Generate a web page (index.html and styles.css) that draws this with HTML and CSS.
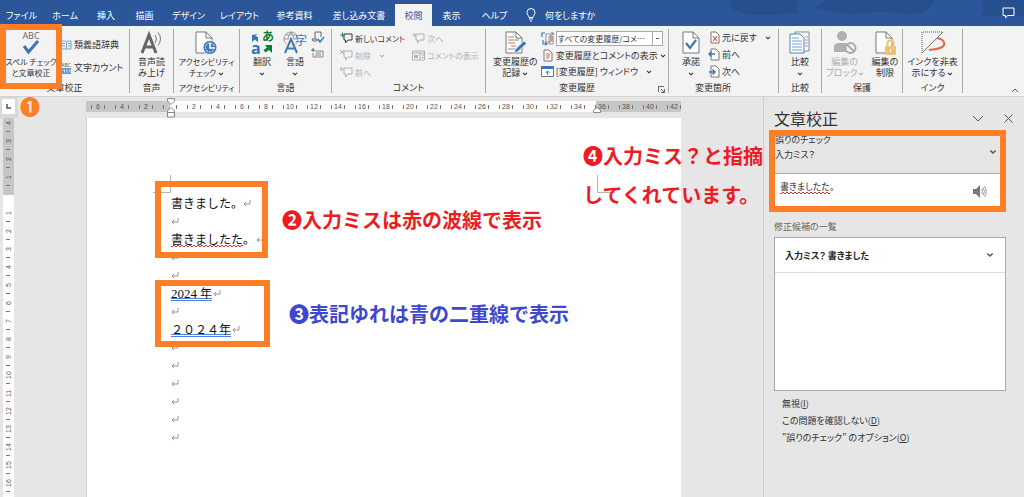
FILE: index.html
```html
<!DOCTYPE html>
<html lang="ja">
<head>
<meta charset="utf-8">
<title>文章校正</title>
<link rel="stylesheet" href="styles.css">
</head>
<body>
<svg class="defs" aria-hidden="true">
  <symbol id="ret" viewBox="0 0 8 8"><path d="M7 1v4H1M3.2 2.8 1 5l2.2 2.2" fill="none" stroke="#8a8a8a" stroke-width=".9"/></symbol>
  <symbol id="chev" viewBox="0 0 6 4"><path d="M1 .8 3 2.8 5 .8" fill="none" stroke="currentColor" stroke-width="1.1"/></symbol>
  <symbol id="bubble" viewBox="0 0 13 13"><path d="M4 2h8v6H8l-2.500 3V8H4z" fill="none" stroke="currentColor" stroke-width="1"/></symbol>
  <symbol id="page" viewBox="0 0 18 23"><path d="M1 1h10l6 6v15H1z" fill="#fff" stroke="#777"/><path d="M11 1v6h6" fill="none" stroke="#777"/></symbol>
</svg>

<header class="titlebar">
  <svg class="waves" viewBox="0 0 300 26" aria-hidden="true"><path d="M6 0h68c-3 3-2 8 2 13-12-2-20 2-32 2C28 15 14 14 8 8zM88 8c8-3 10-8 18-8h104c0 4-4 12-20 14-14 2-22-3-36-2-18 1-24 4-40 1-10-1-16-5-26-5zM260 0h40v17c-12-4-24 0-44-1 8-4 0-10 4-16z" fill="#264f8e"/></svg>
  <nav class="tabs">
    <button>ファイル</button><button>ホーム</button><button>挿入</button><button>描画</button><button>デザイン</button><button>レイアウト</button><button>参考資料</button><button>差し込み文書</button><button class="active">校閲</button><button>表示</button><button>ヘルプ</button>
    <button class="tell"><svg width="10" height="14" viewBox="0 0 10 14"><path d="M3 9.500C3 7.500 1 7 1 4.500a4 4 0 0 1 8 0C9 7 7 7.500 7 9.500zM3 11h4M4 13h2" fill="none" stroke="#fff"/></svg>何をしますか</button>
  </nav>
  <button class="comment-btn" aria-label="コメント"><svg width="13" height="12" viewBox="0 0 13 12"><path d="M1 1h11v7.500H5.500L3.500 11V8.500H1z" fill="none" stroke="#fff"/></svg></button>
</header>

<div class="ribbon">
  <section class="group">
    <div class="body">
      <button class="big spell compact"><svg width="24" height="24" viewBox="0 0 24 24"><text x="12" y="8" text-anchor="middle" class="abc">ABC</text><path d="m5 15 4.500 6L19 10" fill="none" stroke="#3e76b5" stroke-width="3"/></svg><span>スペル チェック<br>と文章校正</span></button>
      <div class="rows two">
        <button><svg width="11" height="12" viewBox="0 0 11 12"><path d="M0 2h4.500l1 1 1-1H10v8H0zM5.500 3v7M0 4.500h4M0 7h4M7 4.500h3M7 7h3" fill="none" stroke="#7ba3cf"/></svg>類義語辞典</button>
        <button><svg width="11" height="12" viewBox="0 0 11 12"><text x="5" y="5" text-anchor="middle" class="tiny">ABC</text><path d="M0 6h10v6H0z" fill="#6898cb"/><path d="M2 8h1.500v2.500M5 8h1v2.500M8 8h1v2.500" stroke="#fff" fill="none" stroke-width=".7"/></svg>文字カウント</button>
      </div>
    </div>
    <h2>文章校正</h2>
  </section>
  <section class="group">
    <div class="body"><button class="big"><svg width="24" height="24" viewBox="0 0 24 24"><path d="M3 22 10 4l7 18M5.500 16h9" fill="none" stroke="#666" stroke-width="3"/><path d="M16 4q3 4 0 8M19 1.500q5 6 0 13" fill="none" stroke="#777"/></svg><span>音声読<br>み上げ</span></button></div>
    <h2>音声</h2>
  </section>
  <section class="group compact">
    <div class="body"><button class="big"><svg width="24" height="24" viewBox="0 0 24 24"><use href="#page" x="1" y="0" width="18" height="23"/><circle cx="16" cy="16.500" r="7" fill="#3e78b8" stroke="#f3f3f3"/><circle cx="16" cy="16.500" r="4.500" fill="none" stroke="#fff" stroke-dasharray="2 1"/><path d="M16 12v5h4" fill="none" stroke="#fff" stroke-width="1.500"/></svg><span>アクセシビリティ<br>チェック <svg class="c"><use href="#chev"/></svg></span></button></div>
    <h2>アクセシビリティ</h2>
  </section>
  <section class="group">
    <div class="body lang">
      <button class="big"><svg width="24" height="24" viewBox="0 0 24 24"><text x="1" y="23" class="ta">a</text><text x="12" y="10" class="tj">あ</text><path d="M2 4v7l2.500-2.500L8 11V6L5 5l3-2z" fill="#2b76bd"/><path d="M22 22v-8h-7l2 2.500-3.500 2.500 2 2.500 3.500-2.500z" fill="#11783c"/></svg><span>翻訳<br><svg class="c"><use href="#chev"/></svg></span></button>
      <button class="big"><svg width="26" height="24" viewBox="0 0 26 24"><circle cx="9" cy="8" r="7" fill="none" stroke="#888" stroke-width=".8"/><path d="M2 8h14M9 1v8M4 4h10M6 8q0-4 3-7 3 3 3 7" fill="none" stroke="#888" stroke-width=".8"/><path d="M3 22 9 8l6 14M5 17.500h8" stroke="#f3f3f3" stroke-width="4" fill="none"/><path d="M3 22 9 8l6 14M5 17.500h8" stroke="#3e78b8" stroke-width="2" fill="none"/><text x="13" y="14" class="tz">字</text></svg><span>言語<br><svg class="c"><use href="#chev"/></svg></span></button>
      <div class="icons">
        <button aria-label="表記ゆれチェック"><svg width="13" height="13" viewBox="0 0 13 13"><path d="M4 1h6v5M4 1v7M1 8h5v2H2z" fill="none" stroke="#666"/><path d="m7 8 2 3 4-5" fill="none" stroke="#3e78b8" stroke-width="1.500"/></svg></button>
        <button aria-label="日本語入力辞書への単語登録"><svg width="13" height="11" viewBox="0 0 13 11"><path d="M4 3h8v6H2V5M4 7h6M5 5h5" fill="none" stroke="#888"/><path d="M0 2h4M2 0v4" stroke="#2a8a57"/></svg></button>
      </div>
    </div>
    <h2>言語</h2>
  </section>
  <section class="group">
    <div class="body comments">
      <div class="rows compact">
        <button><svg width="13" height="13"><use href="#bubble"/><path d="M0 3h5M2.500.5v5" stroke="#2a8a57"/></svg>新しいコメント</button>
        <button class="off" disabled><svg width="13" height="13"><use href="#bubble"/><path d="m0 1 4 4m0-4L0 5" stroke="currentColor"/></svg>削除<svg class="c gap"><use href="#chev"/></svg></button>
        <button class="off" disabled><svg width="13" height="13"><use href="#bubble"/><path d="M0 3h4M2 1 0 3l2 2" fill="none" stroke="currentColor"/></svg>前へ</button>
      </div>
      <div class="rows compact">
        <button class="off" disabled><svg width="13" height="13"><use href="#bubble"/><path d="M0 3h4M2 1l2 2-2 2" fill="none" stroke="currentColor"/></svg>次へ</button>
        <button class="off" disabled><svg width="13" height="13" viewBox="0 0 13 13"><path d="M.5 2h12v9H.5zM.5 4h12M8 4v7M9.500 6H12M9.500 8.500H12" fill="none" stroke="currentColor"/><path d="M2 6h4v3H2z" fill="currentColor"/></svg>コメントの表示</button>
      </div>
    </div>
    <h2>コメント</h2>
  </section>
  <section class="group">
    <div class="body track">
      <button class="big"><svg width="24" height="24" viewBox="0 0 24 24"><use href="#page" x="2" y="0" width="18" height="23"/><path d="M5 6h6M5 12h7M8 15h5" stroke="#e2725b" fill="none"/><path d="M5 9h11M5 18h7" stroke="#888" fill="none"/><path d="m11 22 1.500-4L21 10l2.500 2.500L15 20.500z" fill="#3e78b8" stroke="#f3f3f3" stroke-width=".6"/></svg><span>変更履歴の<br>記録 <svg class="c"><use href="#chev"/></svg></span></button>
      <div class="rows">
        <label class="combo"><svg width="13" height="13" viewBox="0 0 13 13"><path d="M5 2h5v8H5zM8 4h4v8H8z" fill="#fff" stroke="#777" stroke-width=".8"/><path d="M9 6h3M9 8h3" stroke="#dc5a42"/><path d="M1 5V1h3M2 8v4h4M4 10l2 2-2 1M10 1h2v2" fill="none" stroke="#3e78b8" stroke-width="1.200"/></svg><select aria-label="変更内容の表示"><option>すべての変更履歴/コメ…</option></select></label>
        <button><svg width="13" height="13" viewBox="0 0 13 13"><path d="M3 1h5l3 3v8H3z" fill="#fff" stroke="#777"/><path d="M5 5h4M5 7h4M5 9h3" stroke="#dc5a42"/></svg>変更履歴とコメントの表示<svg class="c"><use href="#chev"/></svg></button>
        <button><svg width="13" height="13" viewBox="0 0 13 13"><path d="M.5 1.500h12v10H.5z" fill="#fff" stroke="#777"/><path d="M0 1h13v3H0z" fill="#3e78b8"/><path d="M6.500 10V6M4.500 8l2-2 2 2" fill="none" stroke="#3e78b8"/></svg>[変更履歴] ウィンドウ<svg class="c gap"><use href="#chev"/></svg></button>
      </div>
    </div>
    <h2>変更履歴</h2>
    <button class="launcher" aria-label="変更履歴オプション"><svg width="7" height="7" viewBox="0 0 7 7"><path d="M.5 6V.5H6M3 3l3 3M6.500 3v3.500H3" fill="none" stroke="#555" stroke-width=".9"/></svg></button>
  </section>
  <section class="group">
    <div class="body changes">
      <button class="big"><svg width="18" height="24" viewBox="0 0 18 24"><use href="#page" width="18" height="23"/><path d="m4 12 4 5 6-8" fill="none" stroke="#3e78b8" stroke-width="2.200"/></svg><span>承諾<br><svg class="c"><use href="#chev"/></svg></span></button>
      <div class="rows">
        <button><svg width="11" height="13" viewBox="0 0 11 13"><path d="M2 1h5l3 3v8H2z" fill="#fff" stroke="#777"/><path d="m4 5 4 5m0-5-4 5" stroke="#dc5a42" stroke-width="1.200"/></svg>元に戻す<svg class="c gap"><use href="#chev"/></svg></button>
        <button><svg width="11" height="13" viewBox="0 0 11 13"><path d="M2 1h5l3 3v8H2z" fill="#fff" stroke="#777"/><path d="M0 6h6M2.500 3.500 0 6l2.500 2.500" fill="none" stroke="#3e78b8" stroke-width="1.500"/></svg>前へ</button>
        <button><svg width="11" height="13" viewBox="0 0 11 13"><path d="M2 1h5l3 3v8H2z" fill="#fff" stroke="#777"/><path d="M0 7h6M3.500 4.500 6 7 3.500 9.500" fill="none" stroke="#3e78b8" stroke-width="1.500"/></svg>次へ</button>
      </div>
    </div>
    <h2 class="left">変更箇所</h2>
  </section>
  <section class="group">
    <div class="body"><button class="big"><svg width="22" height="24" viewBox="0 0 22 24"><path d="M6 1h14v19H6z" fill="#fff" stroke="#888"/><path d="M1 3h10l4 4v15H1z" fill="#fff" stroke="#4c83bf"/><path d="M3 7h7M3 10h10M3 13h10M3 16h10M3 19h10M16 6h3M16 9h3M16 12h3M16 15h3" stroke="#77a0cf"/></svg><span>比較<br><svg class="c"><use href="#chev"/></svg></span></button></div>
    <h2>比較</h2>
  </section>
  <section class="group">
    <div class="body protect">
      <button class="big off" disabled><svg width="24" height="24" viewBox="0 0 24 24"><circle cx="9" cy="5" r="5" fill="#b0b0b0"/><path d="M1 21v-5q0-4 5-4h6q4 0 4 4v5z" fill="#b0b0b0"/><circle cx="17.500" cy="17" r="5" fill="#f3f3f3" stroke="#aaa" stroke-width="2"/><path d="m14 13.500 7 7" stroke="#aaa" stroke-width="2"/></svg><span>編集の<br>ブロック<svg class="c"><use href="#chev"/></svg></span></button>
      <button class="big"><svg width="22" height="24" viewBox="0 0 22 24"><use href="#page" x="1" width="18" height="23"/><path d="M11 15h11v9H11z" fill="#eec474"/><path d="M13.500 15v-2.500a3 3 0 0 1 6 0V15" fill="none" stroke="#eec474" stroke-width="2"/><path d="M16.500 18v3" stroke="#fff"/></svg><span>編集の<br>制限</span></button>
    </div>
    <h2>保護</h2>
  </section>
  <section class="group">
    <div class="body"><button class="big"><svg width="24" height="24" viewBox="0 0 24 24"><path d="M1 22V1h21" fill="none" stroke="#555" stroke-dasharray="1 1"/><path d="M1 22 22 1" stroke="#777"/><path d="M16 7c5 1 8 3 7 7-1 3-6 4-15 5" fill="none" stroke="#e0654b" stroke-width="2"/></svg><span>インクを非表<br>示にする <svg class="c"><use href="#chev"/></svg></span></button></div>
    <h2>インク</h2>
  </section>
  <button class="collapse" aria-label="リボンを折りたたむ"><svg width="8" height="5" viewBox="0 0 8 5"><path d="m1 4 3-3 3 3" fill="none" stroke="#555"/></svg></button>
</div>

<main class="workspace">
  <div class="corner"><button aria-label="左揃えタブ"><svg width="5" height="5" viewBox="0 0 5 5"><path d="M1 0v4h4" fill="none" stroke="#555" stroke-width="1.500"/></svg></button></div>
  <div class="hruler">
    <span>6</span><span>4</span><span>2</span><span></span><span>2</span><span>4</span><span>6</span><span>8</span><span>10</span><span>12</span><span>14</span><span>16</span><span>18</span><span>20</span><span>22</span><span>24</span><span>26</span><span>28</span><span>30</span><span>32</span><span>34</span><span>36</span><span>38</span><span>40</span><span>42</span>
  </div>
  <div class="vruler">
    <span class="first">4</span><span>3</span><span>2</span><span>1</span><span></span><span>1</span><span>2</span><span>3</span><span>4</span><span>5</span><span>6</span><span>7</span><span>8</span><span>9</span><span>10</span><span>11</span><span>12</span><span>13</span><span>14</span><span>15</span><span>16</span>
  </div>
  <article class="page">
    <p>書きました。<svg class="r"><use href="#ret"/></svg></p>
    <p><svg class="r"><use href="#ret"/></svg></p>
    <p><span class="typo">書きましたた</span>。<svg class="r"><use href="#ret"/></svg></p>
    <p><svg class="r"><use href="#ret"/></svg></p>
    <p><svg class="r"><use href="#ret"/></svg></p>
    <p><span class="variant"><span class="latin">2024</span>年</span><svg class="r"><use href="#ret"/></svg></p>
    <p><svg class="r"><use href="#ret"/></svg></p>
    <p><span class="variant">２０２４年</span><svg class="r"><use href="#ret"/></svg></p>
    <p><svg class="r"><use href="#ret"/></svg></p>
    <p><svg class="r"><use href="#ret"/></svg></p>
    <p><svg class="r"><use href="#ret"/></svg></p>
    <p><svg class="r"><use href="#ret"/></svg></p>
    <p><svg class="r"><use href="#ret"/></svg></p>
    <p><svg class="r"><use href="#ret"/></svg></p>
  </article>
  <aside class="pane">
    <div class="pane-head"><h1>文章校正</h1>
      <button aria-label="作業ウィンドウのオプション"><svg width="12" height="8" viewBox="0 0 12 8"><path d="m1 1 5 5 5-5" fill="none" stroke="#555"/></svg></button>
      <button aria-label="閉じる"><svg width="9" height="9" viewBox="0 0 9 9"><path d="m.5.5 8 8m0-8-8 8" fill="none" stroke="#555"/></svg></button></div>
    <div class="issue">
      <div><h3>誤りのチェック</h3><p>入力ミス？</p></div>
      <button aria-label="詳細"><svg width="8" height="6" viewBox="0 0 6 4"><use href="#chev"/></svg></button>
    </div>
    <div class="sentence"><p><span class="typo">書きましたた</span>。</p>
      <button aria-label="読み上げ"><svg width="14" height="13" viewBox="0 0 14 13"><path d="M0 4h3l4-4v13L3 9H0z" fill="#777"/><path d="M8.500 4q2 2.500 0 5M10 2.500q3 4 0 8M11.500 1q3.500 5.500 0 11" fill="none" stroke="#888" stroke-width=".9"/></svg></button></div>
    <h4>修正候補の一覧</h4>
    <div class="list"><button><b>入力ミス？ 書きました</b><svg width="8" height="6" viewBox="0 0 6 4"><use href="#chev"/></svg></button></div>
    <div class="links">
      <a href="#">無視(<u>I</u>)</a>
      <a href="#">この問題を確認しない(<u>D</u>)</a>
      <a href="#">"誤りのチェック" のオプション(<u>O</u>)</a>
    </div>
  </aside>
</main>

<div class="overlay">
  <svg class="mark indent" width="8" height="20" viewBox="0 0 8 20"><path d="M.5.500h7V3L4 6.500.5 3zM4 9.500 7.500 13v6H.5v-6zM.5 14.500h7" fill="#fff" stroke="#888"/></svg>
  <svg class="mark right-indent" width="8" height="6" viewBox="0 0 8 6"><path d="M4 .5 7.500 3v2.500H.5V3z" fill="#fff" stroke="#888"/></svg>
  <svg class="mark crop-left" width="18" height="18"><path d="M17.500 0v17.500H0" fill="none" stroke="#b5b5b5"/></svg>
  <svg class="mark crop-right" width="18" height="18"><path d="M.5 0v17.500H18" fill="none" stroke="#b5b5b5"/></svg>
  <div class="mark frame f1"></div>
  <div class="mark frame f2"></div>
  <div class="mark frame f3"></div>
  <div class="mark frame f4"></div>
  <p class="mark note n1">❶</p>
  <p class="mark note n2">❷入力ミスは赤の波線で表示</p>
  <p class="mark note n3">❸表記ゆれは青の二重線で表示</p>
  <p class="mark note n4">❹入力ミス？と指摘<br>してくれています。</p>
</div>
</body>
</html>
```
FILE: styles.css
```css
* { box-sizing: border-box; }
html, body { height: 100%; }
body {
  margin: 0;
  position: relative;
  display: flex;
  flex-direction: column;
  overflow: hidden;
  background: #e6e6e6;
  color: #333;
  font: 9px/11px "Noto Sans CJK JP", sans-serif;
  font-feature-settings: "palt";
}
h1, h2, h3, h4, p { margin: 0; font-weight: normal; }
button, select {
  margin: 0;
  padding: 0;
  border: 0;
  background: none;
  color: inherit;
  font: inherit;
  font-feature-settings: inherit;
  white-space: nowrap;
}
svg { display: block; flex: none; overflow: visible; }
.defs { position: absolute; width: 0; height: 0; }
.c { display: inline-block; width: 6px; height: 4px; vertical-align: middle; }
.gap { margin-left: 6px; }
.off { color: #b0b0b0; }

.titlebar {
  position: relative;
  display: flex;
  justify-content: space-between;
  flex: none;
  height: 26px;
  padding-top: 4px;
  background: #2b579a;
  color: #fff;
}
.waves { position: absolute; top: 0; right: 0; width: 300px; height: 26px; overflow: hidden; }
.tabs {
  display: grid;
  grid-template-columns: 43px 44px 38px 39px 49px 53px 57px 72px 37px 39px 47px auto;
}
.tabs .active { background: #f3f3f3; color: #2b579a; }
.tabs .tell { display: flex; align-items: center; gap: 9px; padding-left: 8px; }
.comment-btn { position: relative; padding: 0 9px 4px 0; }

.ribbon {
  position: relative;
  display: grid;
  flex: none;
  grid-template-columns: 130px 44px 66px 92px 154px 183px 110px 43px 81px 60px auto;
  padding: 3px 0;
  background: #f3f3f3;
  border-bottom: 1px solid #d2d2d2;
}
.group {
  position: relative;
  display: flex;
  flex-direction: column;
  justify-content: space-between;
  height: 64px;
  border-right: 1px solid #a9a9a9;
}
.group h2 { font-size: inherit; text-align: center; white-space: nowrap; }
.group .left { padding-left: 26px; text-align: left; }
.compact { font-size: 8px; }
.body { display: flex; justify-content: center; height: 52px; padding-top: 2px; }
.big { display: flex; flex-direction: column; align-items: center; gap: 1px; }
.spell { width: 50px; }
.body:has(.spell) { justify-content: flex-start; padding-left: 6px; }
.rows { display: flex; flex-direction: column; gap: 4px; }
.rows button { display: flex; align-items: center; gap: 2px; height: 13px; }
.rows.two { gap: 10px; padding: 7px 0 0 5px; }
.abc { font: 9px "Open Sans", sans-serif; fill: #666; }
.tiny { font: 5px "Open Sans", sans-serif; fill: #555; }
.ta { font: bold 16px "Open Sans", sans-serif; fill: #2b76bd; }
.tj { font: bold 12px "Noto Sans CJK JP", sans-serif; fill: #11783c; }
.tz { font: 12px "Noto Sans CJK JP", sans-serif; fill: #3e78b8; }
.body.lang { display: grid; grid-template-columns: 32px 29px 13px; justify-content: start; align-items: start; padding-left: 10px; }
.lang .big { justify-self: start; }
.icons { display: flex; flex-direction: column; gap: 4px; }
.comments { justify-content: flex-start; gap: 7px; padding-left: 8px; }
.comments .rows { padding-top: 1px; }
.track { justify-content: flex-start; gap: 3px; padding-left: 7px; }
.track .rows { gap: 3px; }
.combo { display: flex; align-items: center; gap: 2px; }
.combo select {
  appearance: none;
  width: 107px;
  height: 15px;
  padding-left: 1px;
  border: 1px solid #ababab;
  font-size: 8px;
  background:
    linear-gradient(#555, #555) 99px 6px / 3px 1px no-repeat,
    linear-gradient(#ababab, #ababab) 95px 0 / 1px 15px no-repeat,
    #fff;
}
.launcher { position: absolute; right: 3px; bottom: 0; }
.changes { justify-content: flex-start; gap: 9px; padding-left: 13px; }
.protect { gap: 8px; }
.collapse { justify-self: end; align-self: end; padding: 0 5px 0 0; }

.workspace {
  display: grid;
  grid-template-columns: 86px 595px 1fr 261px;
  grid-template-rows: 21px 1fr;
  flex: 1;
  min-height: 0;
}
.corner { grid-area: 1 / 1; width: 18px; padding: 2px; background: #d9d9d9; }
.corner button { display: flex; align-items: center; justify-content: center; width: 13px; height: 15px; background: #fff; }
.hruler {
  grid-area: 1 / 2;
  display: flex;
  align-self: start;
  height: 11px;
  margin-top: 4px;
  overflow: hidden;
  background: linear-gradient(90deg, #c6c6c6 84px, #fff 84px 510px, #c6c6c6 510px);
  color: #555;
  font: 7px/11px "Liberation Sans", sans-serif;
}
.hruler span { display: flex; flex: none; justify-content: space-between; align-items: center; width: 24px; padding: 0 5px; }
.hruler span::before, .hruler span::after { content: ""; width: 1px; height: 4px; background: #777; }
.vruler {
  grid-area: 2 / 1;
  width: 11px;
  margin-left: 3px;
  overflow: hidden;
  background: linear-gradient(#c6c6c6 77px, #fff 77px);
  color: #555;
  font: 7px/11px "Liberation Sans", sans-serif;
}
.vruler span {
  display: flex;
  align-items: center;
  justify-content: center;
  height: 18px;
  writing-mode: vertical-rl;
  rotate: 180deg;
  background: linear-gradient(#777, #777) center top / 4px 1px no-repeat;
}
.vruler .first { height: 14px; padding-top: 4px; }
.page {
  grid-area: 2 / 2;
  margin-left: 1px;
  padding: 76px 84px 0;
  overflow: hidden;
  background: #fff;
  box-shadow: -1px 0 #cfcfcf;
  color: #111;
  font-size: 12px;
  line-height: 18px;
  font-feature-settings: normal;
}
.page p { display: flex; align-items: center; height: 18px; }
.r { width: 8px; height: 8px; }
.page p > .r:not(:only-child) { margin-left: 1px; }
.latin { margin-right: 3px; font-family: "Liberation Serif", serif; font-size: 13px; }
.typo {
  height: 16px;
  padding-bottom: 1px;
  line-height: 16px;
  background:
    linear-gradient(90deg, #e8303a 2px, transparent 2px) 0 100% / 4px 1px repeat-x,
    linear-gradient(90deg, #e8303a 2px, transparent 2px) 2px calc(100% - 1px) / 4px 1px repeat-x;
}
.variant { height: 16px; line-height: 16px; border-bottom: 3px double #4f80e4; }

.pane {
  grid-area: 1 / 4 / 3 / 5;
  display: flex;
  flex-direction: column;
  padding: 10px 18px 0 10px;
  border-left: 1px solid #cfcfcf;
}
.pane-head { display: flex; align-items: center; gap: 20px; height: 23px; margin-right: -7px; }
.pane-head h1 { flex: 1; font-size: 16px; }
.pane button { color: #555; }
.issue { display: flex; justify-content: space-between; align-items: center; height: 43px; padding: 2px 9px 2px 1px; }
.issue h3, .issue p { font-size: 9px; line-height: 15px; }
.issue div { align-self: flex-start; }
.sentence { display: flex; justify-content: space-between; height: 35px; padding: 0 19px 0 6px; background: #fff; border-top: 1px solid #aaa; }
.sentence p { padding-top: 5px; }
.pane h4 { margin: 12px 0 4px; color: #666; font-size: 9px; line-height: 13px; }
.list { height: 154px; border: 1px solid #aaa; background: #fff; }
.list button { display: flex; justify-content: space-between; align-items: center; width: 100%; height: 35px; padding: 0 11px 0 10px; border-bottom: 1px solid #ddd; }
.list b { color: #222; }
.links { display: flex; flex-direction: column; padding: 4px 8px; line-height: 17px; }
.links a { color: inherit; text-decoration: none; }

.overlay { position: absolute; inset: 0; pointer-events: none; }
.mark { position: absolute; }
.indent { left: 167px; top: 98px; }
.right-indent { left: 593px; top: 107px; }
.crop-left { left: 153px; top: 175px; }
.crop-right { left: 597px; top: 175px; }
.frame { border: 6px solid #ff7f27; }
.f1 { left: 0; top: 24px; width: 62px; height: 65px; }
.f2 { left: 155px; top: 181px; width: 113px; height: 77px; }
.f3 { left: 155px; top: 280px; width: 115px; height: 67px; }
.f4 { left: 769px; top: 130px; width: 237px; height: 82px; }
.note { font-size: 20px; font-weight: bold; line-height: 39px; white-space: nowrap; font-feature-settings: normal; }
.n1 { left: 20px; top: 87px; color: #ff7f27; }
.n2 { left: 282px; top: 200px; color: #ed1c24; }
.n3 { left: 289px; top: 294px; color: #3f48cc; }
.n4 { left: 583px; top: 136px; color: #ed1c24; }
```
